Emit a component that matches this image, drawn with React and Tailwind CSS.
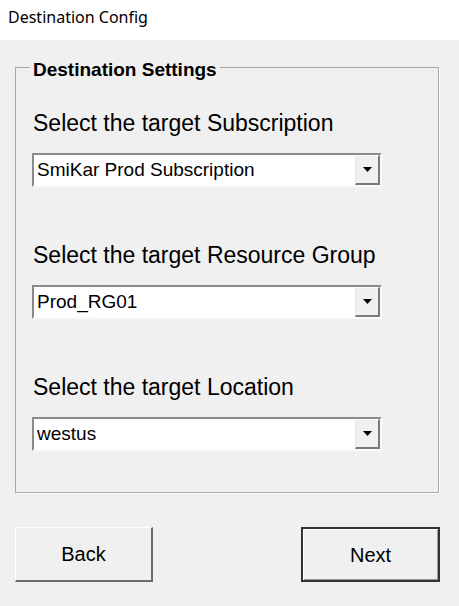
import React from 'react';

const fields = [
  { label: 'Select the target Subscription', value: 'SmiKar Prod Subscription' },
  { label: 'Select the target Resource Group', value: 'Prod_RG01' },
  { label: 'Select the target Location', value: 'westus' },
];

function Combo({ value }) {
  return (
    <div className="flex h-[34px] w-[350px] border-2 border-t-[#8a8a8a] border-l-[#8a8a8a] border-b-[#fafafa] border-r-[#fafafa] bg-white">
      <div className="flex-1 flex items-center pl-[3px] text-[19px] text-black">{value}</div>
      <div className="flex w-[25px] items-center justify-center border-t border-l border-t-white border-l-[#e8e8e8] border-r-2 border-b-2 border-r-[#7a7a7a] border-b-[#7a7a7a] bg-[#f0f0f0]">
        <svg width="9" height="5" viewBox="0 0 9 5">
          <path d="M0 0h9L4.5 5z" fill="#000" />
        </svg>
      </div>
    </div>
  );
}

export default function App() {
  return (
    <div className="w-[459px] h-[606px] bg-[#f0f0f0] flex flex-col font-['Liberation_Sans',Arial,sans-serif] text-black">
      <div className="h-[40px] bg-white pl-[8px] pt-[7px] text-[16px] font-['Noto_Sans',sans-serif] leading-[20px]">
        Destination Config
      </div>

      <div className="pt-[13px] pl-[15px]">
        <fieldset className="h-[440px] w-[424px] border border-[#a8a8a8] shadow-[1px_1px_0_#fff]">
          <legend className="ml-[14px] px-[3px] pt-[6px] text-[19px] font-bold leading-[22px]">
            Destination Settings
          </legend>
          <div className="flex flex-col pt-[29px] pl-[16px]">
            {fields.map((f, i) => (
              <div key={f.label} className={i > 0 ? 'mt-[55px]' : ''}>
                <div className="pl-[1px] text-[23px] leading-[26px]">{f.label}</div>
                <div className="mt-[17px]">
                  <Combo value={f.value} />
                </div>
              </div>
            ))}
          </div>
        </fieldset>
      </div>

      <div className="flex pt-[34px] pl-[15px]">
        <button className="h-[55px] w-[138px] border-t border-l border-t-white border-l-white border-r-2 border-b-2 border-r-[#6a6a6a] border-b-[#6a6a6a] bg-[#f0f0f0] text-[20px]">
          Back
        </button>
        <button className="ml-auto mr-[19px] h-[55px] w-[139px] border-2 border-[#333] bg-[#f0f0f0] text-[20px] shadow-[inset_1px_1px_0_#fff,inset_-1px_-1px_0_#9a9a9a]">
          Next
        </button>
      </div>
    </div>
  );
}
